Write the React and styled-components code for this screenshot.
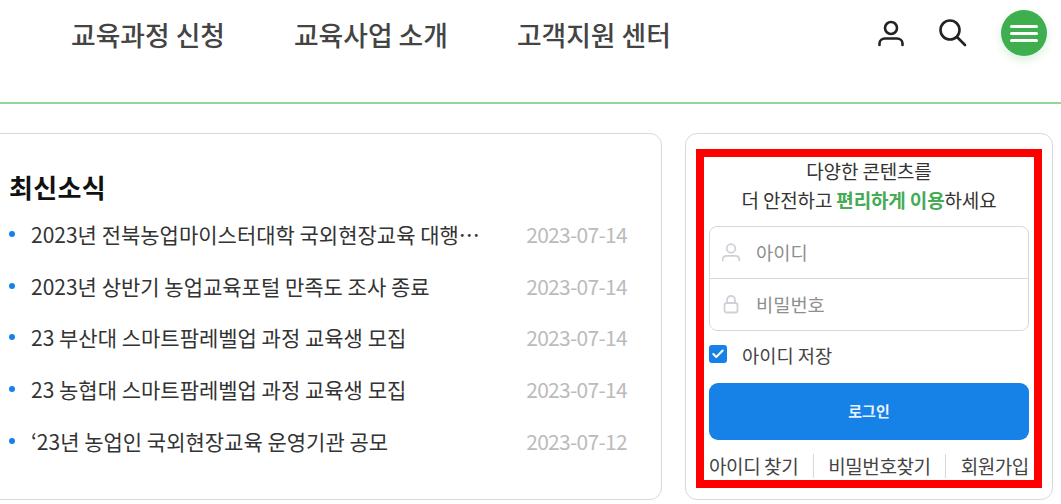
import React from "react";
import styled, { createGlobalStyle } from "styled-components";
import { Check } from "lucide-react";

const GlobalStyle = createGlobalStyle`
  html, body {
    margin: 0;
    padding: 0;
    background: #fff;
    overflow: hidden;
  }
  * {
    box-sizing: border-box;
  }
  body {
    font-family: "Noto Sans CJK KR", "Liberation Sans", sans-serif;
  }
`;

const Page = styled.div`
  width: 1061px;
  height: 504px;
  overflow: hidden;
`;

const Header = styled.header`
  height: 104px;
  display: flex;
  justify-content: space-between;
  align-items: flex-start;
  padding: 0 14px 0 71px;
  border-bottom: 2px solid #90d79b;
`;

const Nav = styled.nav`
  display: flex;
  gap: 69px;
  padding-top: 17px;
`;

const NavItem = styled.a`
  font-size: 26.8px;
  line-height: 36px;
  font-weight: 500;
  color: #444;
`;

const HeaderIcons = styled.div`
  display: flex;
  align-items: center;
  padding-top: 10px;
`;

const IconButton = styled.button`
  width: 28px;
  height: 28px;
  margin-right: ${(p) => p.$gap}px;
  padding: 0;
  border: none;
  background: none;
  display: flex;
  align-items: center;
  justify-content: center;
`;

const MenuButton = styled.button`
  width: 46px;
  height: 46px;
  padding: 0;
  border: none;
  border-radius: 50%;
  background: #3fae4f;
  box-shadow: 0 4px 10px rgba(63, 174, 79, 0.2);
  display: flex;
  flex-direction: column;
  align-items: center;
  justify-content: center;
  gap: 4px;
`;

const MenuBar = styled.span`
  width: 28px;
  height: 3px;
  border-radius: 2px;
  background: #fff;
`;

const Main = styled.main`
  display: flex;
  gap: 23px;
  padding-top: 29px;
  margin-left: -21px;
`;

const Card = styled.section`
  height: 367px;
  background: #fff;
  border: 1px solid #d9d9d9;
  border-radius: 12px;
`;

const NewsCard = styled(Card)`
  width: 683px;
  padding: 35px 34px 0 29px;
`;

const NewsTitle = styled.h2`
  margin: 0 0 3px;
  font-size: 26px;
  line-height: 36px;
  letter-spacing: 0.3px;
  font-weight: 700;
  color: #111;
`;

const NewsList = styled.ul`
  margin: 0;
  padding: 0;
  list-style: none;
`;

const NewsRow = styled.li`
  height: 51.75px;
  display: flex;
  align-items: center;
  justify-content: space-between;
`;

const Bullet = styled.span`
  width: 6px;
  height: 6px;
  margin-right: 16px;
  border-radius: 50%;
  background: #1681e6;
  flex: none;
`;

const NewsText = styled.span`
  flex: 1;
  font-size: 21px;
  color: #333;
  white-space: nowrap;
`;

const NewsDate = styled.span`
  font-size: 21px;
  letter-spacing: -0.7px;
  color: #bbb;
`;

const LoginCard = styled(Card)`
  width: 368px;
  padding: 15px 0 0 10px;
`;

const Highlight = styled.div`
  width: 346px;
  height: 339px;
  border: 8px solid #ff0000;
  padding: 0 5px;
`;

const Intro = styled.p`
  margin: 0 0 12px;
  font-size: 19px;
  line-height: 28.5px;
  letter-spacing: -0.15px;
  text-align: center;
  color: #333;
`;

const Accent = styled.strong`
  color: #45ab55;
  font-weight: 700;
`;

const Fields = styled.div`
  height: 105px;
  border: 1px solid #d6d8dc;
  border-radius: 8px;
  display: flex;
  flex-direction: column;
`;

const Field = styled.div`
  flex: 1;
  display: flex;
  align-items: center;
  gap: 15px;
  padding: 0 0 2px 11px;
  font-size: 18.7px;
  color: #8f8f8f;
  & + & {
    border-top: 1px solid #d6d8dc;
  }
`;

const SaveRow = styled.label`
  display: flex;
  align-items: center;
  gap: 15px;
  margin-top: 7px;
  height: 32px;
  font-size: 18.7px;
  color: #444;
`;

const CheckBox = styled.span`
  width: 18px;
  height: 18px;
  border-radius: 3px;
  background: #1681e6;
  color: #fff;
  display: flex;
  align-items: center;
  justify-content: center;
`;

const LoginButton = styled.button`
  display: block;
  width: 100%;
  height: 57px;
  margin-top: 13px;
  padding: 0 0 2px;
  border: none;
  border-radius: 9px;
  background: #1681e6;
  color: #e8f3fd;
  font-family: inherit;
  font-size: 15px;
  font-weight: 700;
`;

const Links = styled.div`
  display: flex;
  justify-content: space-between;
  align-items: center;
  margin-top: 13px;
`;

const LinkItem = styled.a`
  font-size: 19px;
  line-height: 26px;
  letter-spacing: -0.4px;
  color: #444;
  white-space: nowrap;
`;

const LinkDivider = styled.span`
  width: 1px;
  height: 24px;
  background: #d6d8dc;
`;

const UserIcon = ({ size, color, width }) => (
  <svg width={size} height={size} viewBox="0 0 28 28" fill="none" stroke={color} strokeWidth={width} strokeLinecap="round">
    <circle cx="14" cy="9" r="6" />
    <path d="M2.5 26v-1.5c0-3 2.5-5 5.5-5h12c3 0 5.5 2 5.5 5V26" />
  </svg>
);

const SearchIcon = () => (
  <svg width="28" height="28" viewBox="1 1 28 28" fill="none" stroke="#222" strokeWidth="2.6" strokeLinecap="round">
    <circle cx="12" cy="12" r="9.5" />
    <path d="M19 19l8 8" />
  </svg>
);

const LockIcon = () => (
  <svg width="20" height="20" viewBox="0 0 20 20" fill="none" stroke="#cfd1d6" strokeWidth="1.8">
    <path d="M6 9V6a4 4 0 0 1 8 0v3" />
    <rect x="3.5" y="9" width="13" height="9.5" rx="2" />
  </svg>
);

const news = [
  { title: "2023년 전북농업마이스터대학 국외현장교육 대행…", date: "2023-07-14" },
  { title: "2023년 상반기 농업교육포털 만족도 조사 종료", date: "2023-07-14" },
  { title: "23 부산대 스마트팜레벨업 과정 교육생 모집", date: "2023-07-14" },
  { title: "23 농협대 스마트팜레벨업 과정 교육생 모집", date: "2023-07-14" },
  { title: "‘23년 농업인 국외현장교육 운영기관 공모", date: "2023-07-12" },
];

const App = () => {
  return (
    <Page>
      <GlobalStyle />
      <Header>
        <Nav>
          <NavItem>교육과정 신청</NavItem>
          <NavItem>교육사업 소개</NavItem>
          <NavItem>고객지원 센터</NavItem>
        </Nav>
        <HeaderIcons>
          <IconButton $gap={34}>
            <UserIcon size={28} color="#222" width={2.6} />
          </IconButton>
          <IconButton $gap={34}>
            <SearchIcon />
          </IconButton>
          <MenuButton>
            <MenuBar />
            <MenuBar />
            <MenuBar />
          </MenuButton>
        </HeaderIcons>
      </Header>
      <Main>
        <NewsCard>
          <NewsTitle>최신소식</NewsTitle>
          <NewsList>
            {news.map((item) => (
              <NewsRow key={item.title}>
                <Bullet />
                <NewsText>{item.title}</NewsText>
                <NewsDate>{item.date}</NewsDate>
              </NewsRow>
            ))}
          </NewsList>
        </NewsCard>
        <LoginCard>
          <Highlight>
            <Intro>
              다양한 콘텐츠를
              <br />
              더 안전하고 <Accent>편리하게 이용</Accent>하세요
            </Intro>
            <Fields>
              <Field>
                <UserIcon size={20} color="#cfd1d6" width={2.4} />
                아이디
              </Field>
              <Field>
                <LockIcon />
                비밀번호
              </Field>
            </Fields>
            <SaveRow>
              <CheckBox>
                <Check size={14} strokeWidth={3.5} />
              </CheckBox>
              아이디 저장
            </SaveRow>
            <LoginButton>로그인</LoginButton>
            <Links>
              <LinkItem>아이디 찾기</LinkItem>
              <LinkDivider />
              <LinkItem>비밀번호찾기</LinkItem>
              <LinkDivider />
              <LinkItem>회원가입</LinkItem>
            </Links>
          </Highlight>
        </LoginCard>
      </Main>
    </Page>
  );
};

export default App;
